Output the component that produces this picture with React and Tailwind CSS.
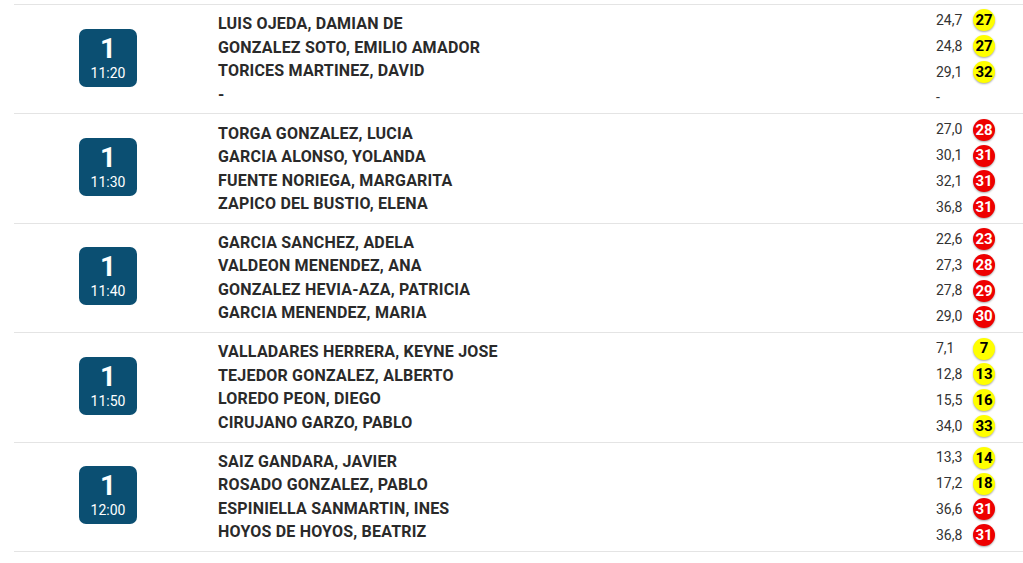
import React from "react";

const Y = "y";
const R = "r";

const groups = [
  {
    time: "11:20",
    rows: [
      ["LUIS OJEDA, DAMIAN DE", "24,7", 27, Y],
      ["GONZALEZ SOTO, EMILIO AMADOR", "24,8", 27, Y],
      ["TORICES MARTINEZ, DAVID", "29,1", 32, Y],
      ["-", "-", null, null],
    ],
  },
  {
    time: "11:30",
    rows: [
      ["TORGA GONZALEZ, LUCIA", "27,0", 28, R],
      ["GARCIA ALONSO, YOLANDA", "30,1", 31, R],
      ["FUENTE NORIEGA, MARGARITA", "32,1", 31, R],
      ["ZAPICO DEL BUSTIO, ELENA", "36,8", 31, R],
    ],
  },
  {
    time: "11:40",
    rows: [
      ["GARCIA SANCHEZ, ADELA", "22,6", 23, R],
      ["VALDEON MENENDEZ, ANA", "27,3", 28, R],
      ["GONZALEZ HEVIA-AZA, PATRICIA", "27,8", 29, R],
      ["GARCIA MENENDEZ, MARIA", "29,0", 30, R],
    ],
  },
  {
    time: "11:50",
    rows: [
      ["VALLADARES HERRERA, KEYNE JOSE", "7,1", 7, Y],
      ["TEJEDOR GONZALEZ, ALBERTO", "12,8", 13, Y],
      ["LOREDO PEON, DIEGO", "15,5", 16, Y],
      ["CIRUJANO GARZO, PABLO", "34,0", 33, Y],
    ],
  },
  {
    time: "12:00",
    rows: [
      ["SAIZ GANDARA, JAVIER", "13,3", 14, Y],
      ["ROSADO GONZALEZ, PABLO", "17,2", 18, Y],
      ["ESPINIELLA SANMARTIN, INES", "36,6", 31, R],
      ["HOYOS DE HOYOS, BEATRIZ", "36,8", 31, R],
    ],
  },
];

function Ball({ n, c }) {
  if (n === null) return <div className="w-[22px] h-[22px]" />;
  return (
    <div
      className={
        c === R
          ? "w-[22px] h-[22px] rounded-full bg-[#ee0000] text-white flex items-center justify-center text-[15px] font-bold shadow-[0_1px_2px_rgba(0,0,0,0.35)]"
          : "w-[22px] h-[22px] rounded-full bg-[#ffff00] text-black flex items-center justify-center text-[15px] font-bold shadow-[0_1px_2px_rgba(0,0,0,0.35)]"
      }
    >
      {n}
    </div>
  );
}

export default function App() {
  return (
    <div className="bg-white w-[1023px] h-[563px] overflow-hidden pt-[4px] pl-[14px] font-['Roboto',sans-serif]">
      {groups.map((g, i) => (
        <div
          key={i}
          className={
            i === groups.length - 1
              ? "flex items-center h-[110px] border-t border-b border-[#e4e4e4]"
              : "flex items-center h-[109.4px] border-t border-[#e4e4e4]"
          }
        >
          <div className="w-[188px] flex justify-center mb-[3px]">
            <div className="w-[58px] h-[58px] rounded-[7px] bg-[#0b4f72] text-white flex flex-col items-center justify-center">
              <div className="text-[28px] font-bold leading-[30px]">1</div>
              <div className="text-[14px] leading-[18px]">{g.time}</div>
            </div>
          </div>
          <div className="flex-1 pl-[16px] flex flex-col">
            {g.rows.map((r, j) => (
              <div key={j} className="text-[16px] font-bold leading-[23.5px] tracking-[0.2px] text-[#2a2a2a]">
                {r[0]}
              </div>
            ))}
          </div>
          <div className="w-[87px] flex flex-col">
            {g.rows.map((r, j) => (
              <div key={j} className="flex items-center h-[25.8px]">
                <div className="w-[37px] text-[14px] text-[#333]">{r[1]}</div>
                <Ball n={r[2]} c={r[3]} />
              </div>
            ))}
          </div>
        </div>
      ))}
    </div>
  );
}
